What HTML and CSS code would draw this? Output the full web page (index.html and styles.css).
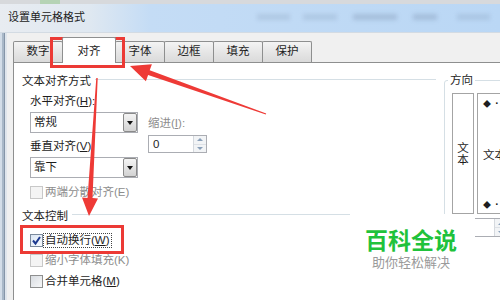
FILE: index.html
```html
<!DOCTYPE html>
<html lang="zh-CN">
  <head>
    <meta charset="UTF-8" />
    <title>设置单元格格式</title>
    <link rel="stylesheet" href="styles.css">
  </head>
  <body>
    <div class="window">
      <div class="titlebar">
        <div class="topstrip"><span class="xl-green"></span></div>
        <div class="title-row">
          <span class="title">设置单元格格式</span>
          <span class="blur b1"></span>
          <span class="blur b2"></span>
          <span class="blur b3"></span>
          <span class="blur b4"></span>
          <span class="blur b5"></span>
        </div>
      </div>

      <div class="client">
        <div class="frame-left"></div>
        <div class="content">
          <div class="tabs">
            <div class="tab">数字</div>
            <div class="tab active">对齐</div>
            <div class="tab">字体</div>
            <div class="tab">边框</div>
            <div class="tab">填充</div>
            <div class="tab">保护</div>
          </div>

          <div class="panel">
            <div class="align-col">
              <div class="legend"><span>文本对齐方式</span></div>
              <div class="pair">
                <div class="pair-left">
                  <div class="label first">水平对齐(<u>H</u>):</div>
                  <div class="select"><span class="value">常规</span><span class="drop"><i></i></span></div>
                  <div class="label">垂直对齐(<u>V</u>):</div>
                  <div class="select"><span class="value">靠下</span><span class="drop"><i></i></span></div>
                </div>
                <div class="pair-right">
                  <div class="label muted">缩进(<u>I</u>):</div>
                  <div class="spin">
                    <span class="value">0</span>
                    <span class="spin-btns"><span class="up"></span><span class="down"></span></span>
                  </div>
                </div>
              </div>

              <div class="check disabled row-e"><span class="box"></span><span>两端分散对齐(E)</span></div>

              <div class="legend row-ctrl"><span>文本控制</span></div>
              <div class="check row-w">
                <span class="box checked">
                  <svg width="11" height="11" viewBox="0 0 11 11"><path d="M2 5.5 L4.5 8.5 L9 2" fill="none" stroke="#1d3a8f" stroke-width="2"/></svg>
                </span>
                <span class="focus">自动换行(<u>W</u>)</span>
              </div>
              <div class="check disabled row-k"><span class="box"></span><span>缩小字体填充(K)</span></div>
              <div class="check row-m"><span class="box"></span><span>合并单元格(<u>M</u>)</span></div>
            </div>

            <fieldset class="orient">
              <legend>方向</legend>
              <div class="dial">
                <div class="vbox"><span>文</span><span>本</span></div>
                <div class="hbox">
                  <span class="dots">◆ <b>·</b></span>
                  <span>文本</span>
                  <span class="dots">◆ <b>·</b></span>
                </div>
              </div>
              <div class="deg"><span class="spin-btns"><span class="up"></span><span class="down"></span></span></div>
            </fieldset>
          </div>
        </div>
      </div>

      <!-- annotations -->
      <div class="mark mark-tab"></div>
      <div class="mark mark-wrap"></div>
      <svg class="arrows" width="500" height="300" viewBox="0 0 500 300">
        <polygon points="130,66 151.9,64.2 149.7,70.3 266.2,113.5 265.8,114.5 148.1,75.1 145.9,81.2" fill="#ee3a36"/>
        <polygon points="89,216 82,197.5 87.5,197.9 96.3,78 97.7,78 92.5,198.1 98,198.5" fill="#ee3a36"/>
      </svg>

      <div class="watermark">
        <div class="wm-title">百科全说</div>
        <div class="wm-sub">助你轻松解决</div>
      </div>
    </div>
  </body>
</html>
```

FILE: styles.css
```css
* {
  margin: 0;
  padding: 0;
  box-sizing: border-box;
}
body {
  width: 500px;
  height: 300px;
  overflow: hidden;
  font-family: "Liberation Sans", "Noto Sans CJK SC", sans-serif;
  font-size: 11.5px;
  color: #1e1e1e;
  background: #f0f0f0;
}
u {
  text-decoration: underline;
}
.window {
  position: relative;
  width: 500px;
  height: 300px;
  overflow: hidden;
  display: flex;
  flex-direction: column;
}

/* title bar */
.titlebar {
  height: 32px;
  flex: none;
  background: linear-gradient(to right, #e8ecf1 0, #dfe8f1 90px, #c4dcf5 150px, #bad7f5 100%);
}
.topstrip {
  height: 4px;
  background: #d7d9dc;
  display: flex;
}
.xl-green {
  width: 20px;
  margin-left: 40px;
  background: #b5d3b5;
}
.title-row {
  display: flex;
  align-items: center;
  height: 26px;
}
.title {
  margin-left: 8px;
  font-size: 11px;
  line-height: 14px;
  color: #222;
}
.blur {
  height: 6px;
  background: rgba(80, 100, 130, 0.14);
  filter: blur(2px);
}
.b1 { width: 33px; margin-left: 172px; }
.b2 { width: 34px; margin-left: 13px; }
.b3 { width: 44px; margin-left: 16px; background: rgba(80, 100, 130, 0.22); }
.b4 { width: 24px; margin-left: 16px; background: rgba(80, 100, 130, 0.22); }
.b5 { width: 33px; margin-left: 20px; }

/* client area */
.client {
  flex: 1;
  display: flex;
  min-height: 0;
  border-top: 1px solid #d3dbe3;
}
.frame-left {
  width: 7px;
  flex: none;
  background: linear-gradient(to right, #d3dde8 0 2px, #a9b8c8 2px 4px, #8595a8 4px 5px, #dfe5ec 5px 7px);
}
.content {
  flex: 1;
  min-width: 0;
  padding-left: 6px;
  display: flex;
  flex-direction: column;
}
.tabs {
  height: 29px;
  flex: none;
  display: flex;
  align-items: flex-end;
}
.tab {
  width: 50px;
  height: 21px;
  flex: none;
  margin-right: -1px;
  border: 1px solid #8e8f8f;
  border-bottom: none;
  border-radius: 2px 2px 0 0;
  background: linear-gradient(#f4f4f4, #e6e6e6 50%, #dadada);
  text-align: center;
  line-height: 19px;
}
.tab.active {
  width: 54px;
  height: 26px;
  margin-bottom: -1px;
  padding-top: 6px;
  line-height: 14px;
  background: #fff;
  position: relative;
  z-index: 1;
}

.panel {
  flex: 1;
  display: flex;
  align-items: flex-start;
  overflow: hidden;
  background: #fff;
  border-top: 1px solid #8e8f8f;
  border-left: 1px solid #8e8f8f;
}
.align-col {
  width: 422px;
  flex: none;
  padding-left: 8px;
  display: flex;
  flex-direction: column;
}
.legend {
  display: flex;
  align-items: center;
  gap: 4px;
  line-height: 14px;
  margin-top: 11px;
}
.legend::after {
  content: "";
  flex: 1;
  height: 2px;
  border-top: 1px solid #d5dfe5;
  border-bottom: 1px solid #fff;
}
.legend.row-ctrl {
  margin-top: 10px;
}

.pair {
  display: flex;
  margin-left: 8px;
}
.pair-left {
  width: 108px;
  display: flex;
  flex-direction: column;
}
.pair-right {
  margin-left: 10px;
  display: flex;
  flex-direction: column;
}
.label {
  line-height: 14px;
  margin-top: 6px;
}
.pair-right .label {
  margin-top: 28px;
}
.muted {
  color: #8d8d8d;
}
.select {
  height: 21px;
  margin-top: 4px;
  border: 1px solid #abadb3;
  display: flex;
  align-items: stretch;
  background: #fff;
}
.select .value {
  flex: 1;
  padding-left: 3px;
  line-height: 19px;
}
.drop {
  width: 14px;
  border: 1px solid #8a8a8a;
  border-radius: 2px;
  background: linear-gradient(#f4f4f4, #e4e4e4 50%, #d2d2d2);
  display: flex;
  align-items: center;
  justify-content: center;
}
.drop i {
  width: 0;
  height: 0;
  border-left: 3.5px solid transparent;
  border-right: 3.5px solid transparent;
  border-top: 4px solid #111;
}
.spin {
  width: 59px;
  height: 18px;
  margin-top: 5px;
  border: 1px solid #abadb3;
  display: flex;
}
.spin .value {
  flex: 1;
  padding-left: 4px;
  line-height: 16px;
}
.spin-btns {
  width: 13px;
  display: flex;
  flex-direction: column;
  border-left: 1px solid #d5d9de;
  background: #f2f4f6;
}
.spin-btns span {
  flex: 1;
  display: flex;
  align-items: center;
  justify-content: center;
}
.spin-btns span::after {
  content: "";
  border-left: 3px solid transparent;
  border-right: 3px solid transparent;
}
.spin-btns .up::after {
  border-bottom: 3px solid #8aa0b9;
}
.spin-btns .down {
  border-top: 1px solid #dde1e6;
}
.spin-btns .down::after {
  border-top: 3px solid #8aa0b9;
}

/* checkboxes */
.check {
  display: flex;
  align-items: center;
  gap: 2px;
  height: 14px;
  margin-left: 8px;
  line-height: 14px;
}
.box {
  width: 13px;
  height: 13px;
  border: 1px solid #8e8f8f;
  background: linear-gradient(135deg, #d9dde2, #f6f7f8);
  display: flex;
  align-items: center;
  justify-content: center;
}
.box.checked {
  border-color: #7b8a9c;
  background: linear-gradient(135deg, #dbe6f3, #f8fbff);
}
.check.disabled {
  color: #8d8d8d;
}
.check.disabled .box {
  border-color: #c8c8c8;
  background: #f4f4f4;
}
.focus {
  margin-left: -2px;
  padding: 0 1px;
  border: 1px dotted #444;
  line-height: 13px;
}
.row-e { margin-top: 7px; }
.row-w { margin-top: 10px; }
.row-k { margin-top: 6px; }
.row-m { margin-top: 7px; }

/* orientation group */
.orient {
  margin-top: 10px;
  margin-left: 8px;
  width: 80px;
  height: 240px;
  flex: none;
  border: 1px solid #d5dfe5;
  border-radius: 3px;
  padding: 6px 0 0 7px;
}
.orient legend {
  margin-left: -4px;
  padding: 0 2px;
  line-height: 14px;
}
.dial {
  display: flex;
  gap: 3px;
}
.vbox {
  width: 22px;
  height: 121px;
  flex: none;
  border: 1px solid #a4a4a4;
  display: flex;
  flex-direction: column;
  align-items: center;
  justify-content: center;
  line-height: 12px;
}
.hbox {
  width: 60px;
  height: 121px;
  flex: none;
  border: 1px solid #a4a4a4;
  display: flex;
  flex-direction: column;
  justify-content: space-between;
  padding: 2px 0 0 5px;
  line-height: 14px;
}
.dots {
  font-size: 8px;
}
.dots b {
  font-size: 11px;
  margin-left: 2px;
}
.deg {
  margin-top: 4px;
  width: 56px;
  height: 19px;
  border: 1px solid #abadb3;
  display: flex;
  justify-content: flex-end;
}

/* annotations */
.mark {
  position: absolute;
  border: 3px solid #ec3a35;
}
.mark-tab {
  left: 50px;
  top: 37px;
  width: 75px;
  height: 31px;
}
.mark-wrap {
  left: 20px;
  top: 225px;
  width: 104px;
  height: 29px;
}
.arrows {
  position: absolute;
  left: 0;
  top: 0;
}
.watermark {
  position: absolute;
  left: 350px;
  top: 214px;
  width: 125px;
  height: 86px;
  background: #fff;
  padding-left: 15px;
  padding-top: 13px;
}
.wm-title {
  font-family: "Noto Sans CJK SC", sans-serif;
  font-size: 23px;
  font-weight: bold;
  line-height: 24px;
  color: #1fc23b;
}
.wm-sub {
  font-family: "Noto Sans CJK SC", sans-serif;
  font-size: 13px;
  line-height: 14px;
  margin-top: 4px;
  margin-left: 7px;
  color: #9a9a9a;
}
```
